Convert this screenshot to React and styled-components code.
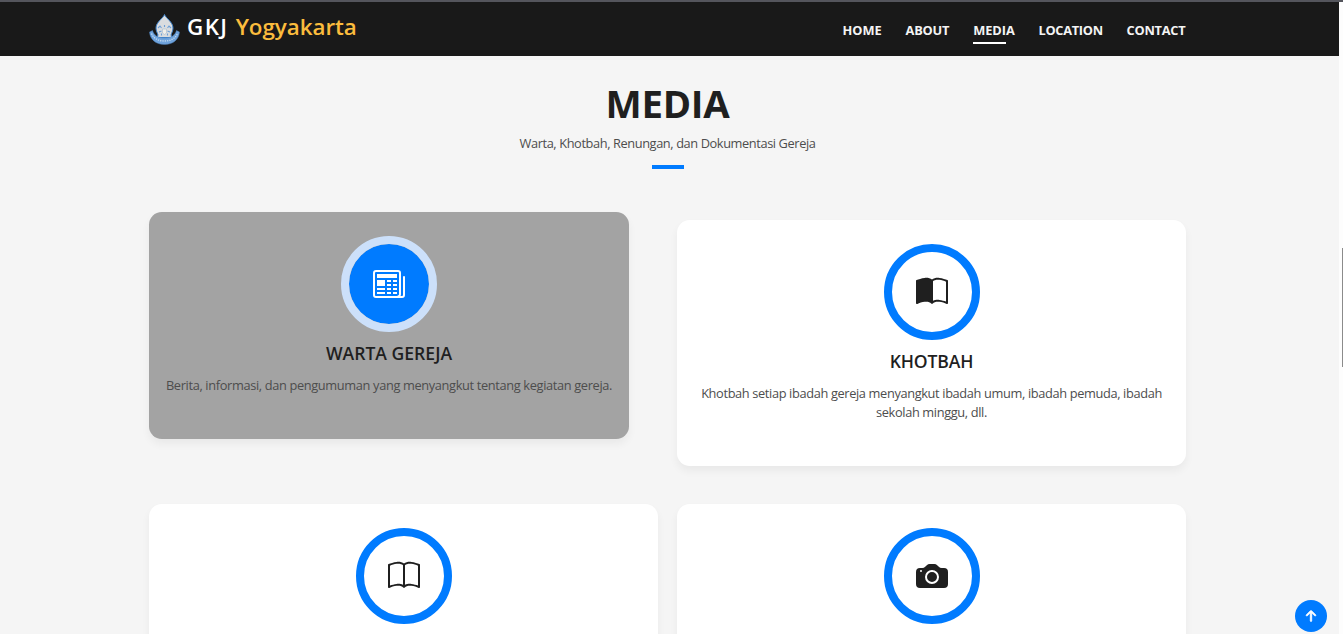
import React from "react";
import styled, { createGlobalStyle } from "styled-components";
import { BsNewspaper, BsBookHalf, BsBook, BsCameraFill, BsArrowUpShort } from "react-icons/bs";

const GlobalStyle = createGlobalStyle`
  * { box-sizing: border-box; }
  html, body { margin: 0; padding: 0; }
  body { overflow: hidden; background: #f5f5f5; font-family: "Open Sans", "Noto Sans", sans-serif; }
  h1, h2, h3, p { margin: 0; }
`;

const Screen = styled.div`
  display: flex;
  flex-direction: column;
  height: 634px;
  overflow: hidden;
`;
const TopEdge = styled.div`
  flex: none;
  height: 2px;
  background: #54555c;
`;
const Viewport = styled.div`
  display: flex;
  flex: 1;
  min-height: 0;
`;
const Page = styled.div`
  flex: 1;
  min-width: 0;
  overflow: hidden;
  background: #f5f5f5;
`;
const ScrollTrack = styled.div`
  width: 4px;
  padding: 246px 0 0 3px;
  background: #fdfdfd;
`;
const ScrollThumb = styled.div`
  height: 119px;
  background: #8b8b8b;
`;
const Header = styled.header`
  display: flex;
  justify-content: space-between;
  height: 54px;
  padding: 0 153px 0 149px;
  background: #191919;
`;
const Brand = styled.div`
  display: flex;
  align-items: flex-start;
  padding-top: 10px;
  gap: 7px;
`;
const LogoMark = styled.svg`
  margin-top: 2px;
`;
const BrandName = styled.h1`
  font-size: 22.4px;
  line-height: 30px;
  font-weight: 600;
  letter-spacing: 1.4px;
  color: #fff;
  white-space: pre;
`;
const Accent = styled.span`
  color: #fbbc3d;
  letter-spacing: -0.05px;
`;
const Nav = styled.nav`
  display: flex;
  gap: 24px;
  padding-top: 18px;
`;
const NavLink = styled.a`
  display: flex;
  flex-direction: column;
  width: ${(p) => p.$width}px;
  font-size: 12.8px;
  line-height: 20px;
  font-weight: 700;
  letter-spacing: ${(p) => p.$spacing}px;
  color: #f4f4f4;
  white-space: nowrap;
  &::after {
    content: "";
    width: 33px;
    height: 2px;
    margin-top: 2px;
    background: ${(p) => (p.$active ? "#fff" : "transparent")};
  }
`;
const Section = styled.section`
  padding: 23px 153px 0 149px;
`;
const Heading = styled.div`
  display: flex;
  flex-direction: column;
  align-items: center;
  height: 133px;
`;
const Title = styled.h2`
  font-size: 38.4px;
  line-height: 48px;
  font-weight: 700;
  letter-spacing: -0.3px;
  color: #1f1f1f;
`;
const Subtitle = styled.p`
  margin-top: 6px;
  font-size: 12.8px;
  line-height: 20px;
  letter-spacing: -0.4px;
  color: #4d4d4d;
`;
const Rule = styled.div`
  width: 32px;
  height: 4px;
  margin-top: 12px;
  background: #007bff;
`;
const Cards = styled.div`
  display: grid;
  grid-template-columns: 509px 509px;
  grid-template-rows: 254px 246px;
  column-gap: 19px;
  row-gap: 38px;
`;
const Card = styled.article`
  display: flex;
  flex-direction: column;
  align-items: center;
  width: ${(p) => (p.$hovered ? 480 : 509)}px;
  height: ${(p) => (p.$hovered ? 227 : 246)}px;
  align-self: ${(p) => (p.$hovered ? "start" : "end")};
  padding: 24px 16px;
  border-radius: 12.8px;
  background: ${(p) => (p.$hovered ? "#a3a3a3" : "#fff")};
  box-shadow: 0 5px 8px rgba(0, 0, 0, 0.05);
  text-align: center;
`;
const IconRing = styled.div`
  display: flex;
  flex: none;
  align-items: center;
  justify-content: center;
  width: 96px;
  height: 96px;
  border: 8px solid ${(p) => (p.$hovered ? "#cce0fa" : "#007bff")};
  border-radius: 50%;
  background: ${(p) => (p.$hovered ? "#007bff" : "#fff")};
  background-clip: padding-box;
  color: ${(p) => (p.$hovered ? "#fff" : "#1f1f1f")};
  font-size: 32px;
`;
const CardTitle = styled.h3`
  margin-top: 8px;
  font-size: 17.6px;
  line-height: 26px;
  font-weight: 600;
  letter-spacing: ${(p) => p.$spacing}px;
  color: #1f1f1f;
`;
const CardText = styled.p`
  margin-top: 10px;
  font-size: 12.8px;
  line-height: 19px;
  letter-spacing: ${(p) => p.$spacing}px;
  color: #4d4d4d;
  white-space: pre;
`;
const ToTop = styled.button`
  position: fixed;
  right: 16px;
  bottom: 2px;
  display: flex;
  align-items: center;
  justify-content: center;
  width: 32px;
  height: 32px;
  padding: 0;
  border: 0;
  border-radius: 50%;
  background: #007bff;
  color: #fff;
  font-size: 22px;
  svg { stroke-width: 0.6; }
`;

function Logo() {
  return (
    <LogoMark width="31" height="31" viewBox="0 0 31 31">
      <path d="M15.500 0.500C14.500 4 7 8 7 14c0 3 1.500 5 2 7l-1 2.500h15L22 21c.5-2 2-4 2-7 0-6-7.500-10-8.500-13.500z" fill="#d9dcdf" stroke="#3f83cc" strokeWidth="1" />
      <path d="M9 14l2-2 1.500 2M22 14l-2-2-1.500 2M10 18l2.500-1M21 18l-2.500-1M12.500 21.500v-2M18.500 21.500v-2M15.500 11v2" fill="none" stroke="#6d9fd6" strokeWidth="1.100" />
      <path d="M13.500 15h4v4l-2 1.500-2-1.500z" fill="#f1efe9" stroke="#a3b8cf" strokeWidth="0.600" />
      <path d="M0.500 18l3-1.500C5 21.500 9 24 15.500 24S26 21.500 27.500 16.500l3 1.500c-.5 7-6 12.500-15 12.500S1 25 .5 18z" fill="#6fa3dc" stroke="#4a7fb9" strokeWidth="0.500" />
      <path d="M2.500 19.500c2 5 7 7.500 13 7.500s11-2.500 13-7.500" fill="none" stroke="#c3d9ef" strokeWidth="1.300" strokeDasharray="1.300 1" />
    </LogoMark>
  );
}

const links = [
  { label: "HOME", width: 39, spacing: -0.05 },
  { label: "ABOUT", width: 43.7, spacing: -0.2 },
  { label: "MEDIA", width: 41.3, spacing: -0.05, active: true },
  { label: "LOCATION", width: 64.1, spacing: -0.3 },
  { label: "CONTACT", width: 59.4, spacing: -0.25 },
];

const cards = [
  { title: "WARTA GEREJA", text: "Berita, informasi, dan pengumuman yang menyangkut tentang kegiatan gereja.", Icon: BsNewspaper, hovered: true, spacing: 0, textSpacing: -0.35 },
  { title: "KHOTBAH", text: "Khotbah setiap ibadah gereja menyangkut ibadah umum, ibadah pemuda, ibadah\nsekolah minggu, dll.", Icon: BsBookHalf, spacing: -0.15, textSpacing: -0.36 },
  { title: "RENUNGAN", Icon: BsBook },
  { title: "DOKUMENTASI", Icon: BsCameraFill },
];

export default function App() {
  return (
    <Screen>
      <GlobalStyle />
      <TopEdge />
      <Viewport>
        <Page>
          <Header>
            <Brand>
              <Logo />
              <BrandName>GKJ <Accent>Yogyakarta</Accent></BrandName>
            </Brand>
            <Nav>
              {links.map((l) => (
                <NavLink key={l.label} $width={l.width} $spacing={l.spacing} $active={l.active}>{l.label}</NavLink>
              ))}
            </Nav>
          </Header>
          <Section>
            <Heading>
              <Title>MEDIA</Title>
              <Subtitle>Warta, Khotbah, Renungan, dan Dokumentasi Gereja</Subtitle>
              <Rule />
            </Heading>
            <Cards>
              {cards.map(({ title, text, Icon, hovered, spacing, textSpacing }) => (
                <Card key={title} $hovered={hovered}>
                  <IconRing $hovered={hovered}><Icon /></IconRing>
                  {text && <CardTitle $spacing={spacing}>{title}</CardTitle>}
                  {text && <CardText $spacing={textSpacing}>{text}</CardText>}
                </Card>
              ))}
            </Cards>
          </Section>
        </Page>
        <ScrollTrack><ScrollThumb /></ScrollTrack>
      </Viewport>
      <ToTop aria-label="Back to top"><BsArrowUpShort stroke="currentColor" /></ToTop>
    </Screen>
  );
}
